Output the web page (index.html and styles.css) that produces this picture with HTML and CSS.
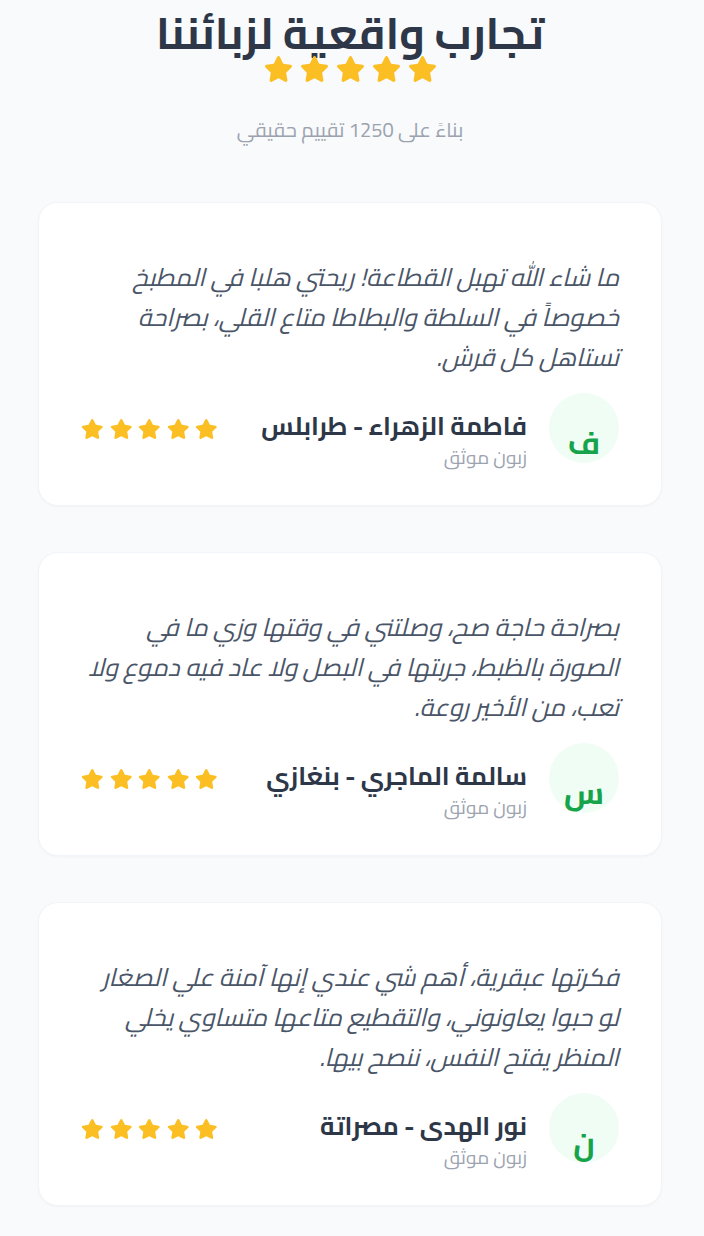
FILE: index.html
```html
<!DOCTYPE html>
<html lang="ar" dir="rtl">
<head>
    <meta charset="utf-8">
    <title>تجارب واقعية لزبائننا</title>
    <meta name="viewport" content="width=device-width, initial-scale=1">
    <link rel="stylesheet" href="styles.css">
</head>
<body>
    <svg width="0" height="0" style="position:absolute">
        <symbol id="star" viewBox="0 0 576 512">
            <path d="M259.3 17.8L194 150.2 47.9 171.5c-26.2 3.8-36.7 36.1-17.7 54.6l105.7 103-25 145.5c-4.5 26.3 23.2 46 46.4 33.7L288 439.6l130.7 68.7c23.2 12.2 50.9-7.4 46.4-33.7l-25-145.5 105.7-103c19-18.5 8.5-50.8-17.7-54.6L382 150.2 316.7 17.8c-11.7-23.6-45.6-23.9-57.4 0z"/>
        </symbol>
    </svg>

    <section class="testimonials">
        <header class="section-head">
            <h2 class="title">تجارب واقعية لزبائننا</h2>
            <div class="stars stars-big">
                <svg><use href="#star"/></svg>
                <svg><use href="#star"/></svg>
                <svg><use href="#star"/></svg>
                <svg><use href="#star"/></svg>
                <svg><use href="#star"/></svg>
            </div>
            <p class="subtitle">بناءً على 1250 تقييم حقيقي</p>
        </header>

        <div class="card">
            <p class="quote">ما شاء الله تهبل القطاعة! ريحتي هلبا في المطبخ خصوصاً في السلطة والبطاطا متاع القلي، بصراحة تستاهل كل قرش.</p>
            <div class="author-row">
                <div class="author">
                    <div class="avatar">ف</div>
                    <div class="info">
                        <div class="name">فاطمة الزهراء - طرابلس</div>
                        <div class="verified">زبون موثق</div>
                    </div>
                </div>
                <div class="stars">
                    <svg><use href="#star"/></svg>
                    <svg><use href="#star"/></svg>
                    <svg><use href="#star"/></svg>
                    <svg><use href="#star"/></svg>
                    <svg><use href="#star"/></svg>
                </div>
            </div>
        </div>

        <div class="card">
            <p class="quote">بصراحة حاجة صح، وصلتني في وقتها وزي ما في الصورة بالظبط، جربتها في البصل ولا عاد فيه دموع ولا تعب، من الأخير روعة.</p>
            <div class="author-row">
                <div class="author">
                    <div class="avatar">س</div>
                    <div class="info">
                        <div class="name">سالمة الماجري - بنغازي</div>
                        <div class="verified">زبون موثق</div>
                    </div>
                </div>
                <div class="stars">
                    <svg><use href="#star"/></svg>
                    <svg><use href="#star"/></svg>
                    <svg><use href="#star"/></svg>
                    <svg><use href="#star"/></svg>
                    <svg><use href="#star"/></svg>
                </div>
            </div>
        </div>

        <div class="card">
            <p class="quote">فكرتها عبقرية، أهم شي عندي إنها آمنة علي الصغار لو حبوا يعاونوني، والتقطيع متاعها متساوي يخلي المنظر يفتح النفس، ننصح بيها.</p>
            <div class="author-row">
                <div class="author">
                    <div class="avatar">ن</div>
                    <div class="info">
                        <div class="name">نور الهدى - مصراتة</div>
                        <div class="verified">زبون موثق</div>
                    </div>
                </div>
                <div class="stars">
                    <svg><use href="#star"/></svg>
                    <svg><use href="#star"/></svg>
                    <svg><use href="#star"/></svg>
                    <svg><use href="#star"/></svg>
                    <svg><use href="#star"/></svg>
                </div>
            </div>
        </div>
    </section>
</body>
</html>
```

FILE: styles.css
```css
body {
    margin: 0;
    background: #f8fafc;
    font-family: "Cairo", "Tajawal", "Noto Kufi Arabic", "Noto Sans", sans-serif;
    color: #2d3748;
}

.testimonials { padding: 8px 42px 40px 38px; }

.section-head { text-align: center; margin-bottom: 60px; }
.title { margin: 0; font-size: 44px; line-height: 50px; font-weight: 700; color: #2d3748; }
.subtitle { margin: 36px 0 0; font-size: 20px; line-height: 24px; color: #9ca3af; }

.stars { display: flex; gap: 6px; color: #fbbf24; }
.stars svg { width: 22.5px; height: 20px; fill: currentColor; }
.stars-big { justify-content: center; gap: 7px; margin-top: -2px; }
.stars-big svg { width: 29px; height: 26px; }

.card {
    background: #fff;
    border: 1px solid #f1f5f9;
    border-radius: 20px;
    box-shadow: 0 1px 3px rgba(15, 23, 42, 0.03);
    padding: 54px 42px 35px;
    margin-bottom: 46px;
}
.quote {
    margin: 0 0 16px;
    font-size: 25px;
    line-height: 40px;
    font-style: italic;
    color: #4a5568;
}

.author-row { display: flex; justify-content: space-between; align-items: flex-start; }
.author { display: flex; gap: 22px; align-items: flex-start; }
.avatar {
    width: 70px;
    height: 70px;
    border-radius: 50%;
    background: #f0fdf4;
    color: #16a34a;
    font-size: 31px;
    font-weight: 700;
    display: flex;
    justify-content: center;
    align-items: flex-end;
    line-height: 1;
    padding-bottom: 4px;
    box-sizing: border-box;
}
.info { padding-top: 17px; }
.name { font-size: 25px; line-height: 32px; font-weight: 700; color: #2d3748; }
.verified { margin-top: 2px; font-size: 19px; line-height: 26px; color: #9ca3af; }
.author-row .stars { margin-top: 26px; }
```
